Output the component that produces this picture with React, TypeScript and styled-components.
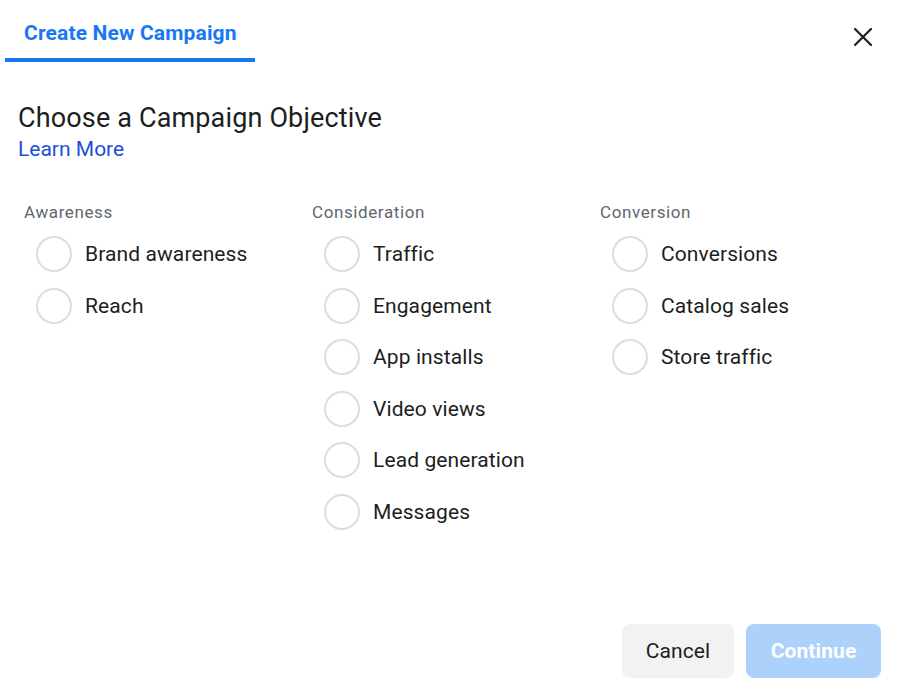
import styled, { createGlobalStyle } from 'styled-components';

const GROUPS = [
  { title: 'Awareness', items: ['Brand awareness', 'Reach'] },
  {
    title: 'Consideration',
    items: ['Traffic', 'Engagement', 'App installs', 'Video views', 'Lead generation', 'Messages'],
  },
  { title: 'Conversion', items: ['Conversions', 'Catalog sales', 'Store traffic'] },
];

const GlobalStyle = createGlobalStyle`
  html, body {
    margin: 0;
    padding: 0;
    background: #fff;
  }
  body {
    font-family: Roboto, "Liberation Sans", Arial, sans-serif;
    color: #1c1e21;
  }
`;

export default function App() {
  return (
    <>
      <GlobalStyle />
      <Page>
        <Header>
          <Tab>Create New Campaign</Tab>
          <CloseButton aria-label="Close">
            <svg width="18" height="18" viewBox="0 0 18 18">
              <path d="M1 1L17 17M17 1L1 17" stroke="#1c1e21" strokeWidth="2.2" strokeLinecap="round" />
            </svg>
          </CloseButton>
        </Header>
        <Body>
          <Title>Choose a Campaign Objective</Title>
          <LearnMore href="#">Learn More</LearnMore>
          <Columns>
            {GROUPS.map((group) => (
              <Column key={group.title}>
                <GroupTitle>{group.title}</GroupTitle>
                <Options>
                  {group.items.map((item) => (
                    <Option key={item}>
                      <Radio />
                      <OptionLabel>{item}</OptionLabel>
                    </Option>
                  ))}
                </Options>
              </Column>
            ))}
          </Columns>
        </Body>
        <Footer>
          <Button>Cancel</Button>
          <Button $primary disabled>
            Continue
          </Button>
        </Footer>
      </Page>
    </>
  );
}

const Page = styled.div`
  height: 100vh;
  display: flex;
  flex-direction: column;
  box-sizing: border-box;
`;

const Header = styled.header`
  display: flex;
  justify-content: space-between;
  align-items: flex-start;
  padding-left: 5px;
  padding-right: 28px;
`;

const Tab = styled.div`
  width: 250px;
  box-sizing: border-box;
  padding: 21px 0 13px 19px;
  font-size: 21px;
  line-height: 24px;
  font-weight: 700;
  letter-spacing: 0.15px;
  color: #1877f2;
  border-bottom: 4px solid #1877f2;
`;

const CloseButton = styled.button`
  margin-top: 28px;
  padding: 0;
  border: none;
  background: none;
  cursor: pointer;
  display: flex;
`;

const Body = styled.main`
  padding: 40px 18px 0;
  display: flex;
  flex-direction: column;
`;

const Title = styled.h1`
  margin: 0;
  font-size: 27px;
  line-height: 32px;
  font-weight: 400;
  letter-spacing: 0.15px;
  color: #1c1e21;
`;

const LearnMore = styled.a`
  align-self: flex-start;
  margin-top: 1px;
  font-size: 21px;
  line-height: 28px;
  color: #1b4fd8;
  text-decoration: none;
`;

const Columns = styled.div`
  display: grid;
  grid-template-columns: repeat(3, 288px);
  padding-left: 6px;
  margin-top: 38px;
`;

const Column = styled.section`
  display: flex;
  flex-direction: column;
`;

const GroupTitle = styled.h2`
  margin: 0;
  font-size: 17px;
  line-height: 22px;
  font-weight: 400;
  letter-spacing: 0.6px;
  color: #606770;
`;

const Options = styled.div`
  display: flex;
  flex-direction: column;
  gap: 15.6px;
  margin-top: 13px;
  padding-left: 12px;
`;

const Option = styled.label`
  display: flex;
  align-items: center;
  gap: 13px;
  cursor: pointer;
`;

const Radio = styled.span`
  width: 36px;
  height: 36px;
  box-sizing: border-box;
  border-radius: 50%;
  border: 2px solid #dadde1;
  flex-shrink: 0;
`;

const OptionLabel = styled.span`
  font-size: 21px;
  line-height: 24px;
  letter-spacing: 0.1px;
  color: #1c1e21;
`;

const Footer = styled.footer`
  margin-top: auto;
  display: flex;
  justify-content: flex-end;
  gap: 12px;
  padding: 0 19px 11px;
`;

const Button = styled.button<{ $primary?: boolean }>`
  height: 54px;
  padding: 0;
  width: ${(p) => (p.$primary ? '135px' : '112px')};
  border: none;
  border-radius: 8px;
  font-family: Roboto, "Liberation Sans", Arial, sans-serif;
  font-size: 21px;
  font-weight: ${(p) => (p.$primary ? 700 : 400)};
  letter-spacing: 0.1px;
  color: ${(p) => (p.$primary ? '#ffffff' : '#1c1e21')};
  background: ${(p) => (p.$primary ? '#acd2fb' : '#f2f2f2')};
  cursor: ${(p) => (p.$primary ? 'not-allowed' : 'pointer')};
`;
